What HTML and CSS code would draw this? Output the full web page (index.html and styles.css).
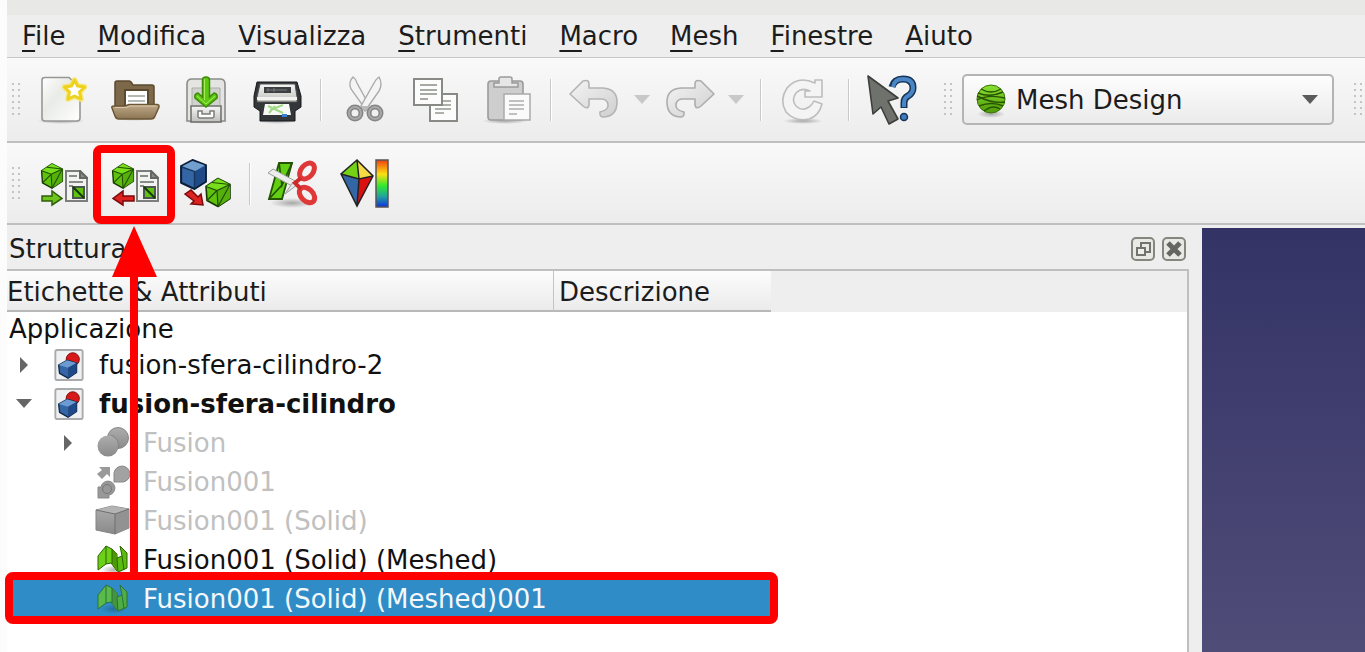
FILE: index.html
```html
<!DOCTYPE html>
<html lang="it">
<head>
<meta charset="utf-8">
<title>Mesh Design</title>
<link rel="stylesheet" href="styles.css">
</head>
<body>
<svg class="defs" aria-hidden="true">
  <defs>
    <linearGradient id="paper" x1="0" y1="0" x2="1" y2="1"><stop offset="0" stop-color="#fff"/><stop offset=".4" stop-color="#e9ebe7"/><stop offset="1" stop-color="#fff"/></linearGradient>
    <linearGradient id="metal" x1="0" y1="0" x2="0" y2="1"><stop offset="0" stop-color="#f6f6f4"/><stop offset="1" stop-color="#bfc0bc"/></linearGradient>
    <linearGradient id="green" x1="0" y1="0" x2="0" y2="1"><stop offset="0" stop-color="#8ae234"/><stop offset="1" stop-color="#4e9a06"/></linearGradient>
    <linearGradient id="wood" x1="0" y1="0" x2="0" y2="1"><stop offset="0" stop-color="#bfa888"/><stop offset="1" stop-color="#8c7552"/></linearGradient>
    <linearGradient id="silver" x1="0" y1="0" x2="1" y2="1"><stop offset="0" stop-color="#f4f4f4"/><stop offset="1" stop-color="#cfcfcf"/></linearGradient>
    <linearGradient id="gray" x1="0" y1="0" x2="0" y2="1"><stop offset="0" stop-color="#adadad"/><stop offset="1" stop-color="#8a8a8a"/></linearGradient>
    <linearGradient id="rainbow" x1="0" y1="0" x2="0" y2="1"><stop offset="0" stop-color="#f04010"/><stop offset=".3" stop-color="#fce010"/><stop offset=".55" stop-color="#30e830"/><stop offset=".78" stop-color="#20a0a0"/><stop offset="1" stop-color="#1030e0"/></linearGradient>
    <radialGradient id="shade"><stop offset="0" stop-color="#000" stop-opacity=".3"/><stop offset="1" stop-color="#000" stop-opacity="0"/></radialGradient>
    <symbol id="mesh-cube" viewBox="0 0 26 30">
      <path d="M1 9 13 1 25 7V21L13 29 2 23Z" fill="#5fc20e" stroke="#173802" stroke-width="1.600" stroke-linejoin="round"/>
      <path d="M1 9 13 1 25 7 12 13Z" fill="#76de1a"/>
      <path d="M12 13 25 7V21L13 29Z" fill="#55b00c"/>
      <path d="M1 9 12 13 25 7M12 13 13 29M12 13 2 23M25 7 13 29M7 5 25 7" fill="none" stroke="#214d04" stroke-width="1.200"/>
    </symbol>
    <symbol id="blue-cube" viewBox="0 0 26 30">
      <path d="M1 7 12 1 25 6V22L14 29 1 23Z" fill="#3465a4" stroke="#0b1f3a" stroke-width="2" stroke-linejoin="round"/>
      <path d="M2 7 12 2 24 6 14 12Z" fill="#729fcf"/>
      <path d="M14 12 24 7V21L14 28Z" fill="#204a87"/>
      <path d="M2 8 14 12V28" fill="none" stroke="#17375f" stroke-width="1.400"/>
    </symbol>
    <symbol id="mesh-file" viewBox="0 0 23 32">
      <path d="M1 1H15L22 8V31H1Z" fill="#f2f2f0" stroke="#7b7e7b" stroke-width="2"/>
      <path d="M15 1V8H22Z" fill="#8b8e88" stroke="#666864" stroke-width="2"/>
      <path d="M4 6H12M4 12H18M4 16H8" stroke="#8a8c88" stroke-width="2"/>
      <path d="M8 17H19V28H8Z" fill="#5fc20e" stroke="#4a5750" stroke-width="2"/>
      <path d="M8 17 19 28" stroke="#173802" stroke-width="2"/>
    </symbol>
    <symbol id="doc" viewBox="0 0 32 34">
      <rect x="1.500" y="1" width="29" height="32" rx="2" fill="#eef0f1" stroke="#a9abad" stroke-width="2"/>
      <circle cx="20" cy="11" r="7" fill="#d81818" stroke="#7d0808"/>
      <path d="M5 17 14 12 24 15V25L15 31 6 26Z" fill="#3465a4" stroke="#12294a" stroke-width="1.500" stroke-linejoin="round"/>
      <path d="M5 17 14 12 24 15 15 20Z" fill="#6b9bd0"/>
      <path d="M15 20 24 15V25L15 31Z" fill="#204a87"/>
    </symbol>
    <symbol id="mesh" viewBox="0 0 32 32">
      <ellipse cx="17" cy="26" rx="13" ry="5" fill="url(#shade)"/>
      <path d="M1 26V12L9 2 15 5 20 10V27L14 19 9 20Z" fill="#6bd016" stroke="#2c6505" stroke-linejoin="round"/>
      <path d="M15 5 20 10V27L15 20Z" fill="#4e9a06"/>
      <path d="M20 14 25 12 23 2 30 9V24L21 28Z" fill="#5cbc0d" stroke="#2c6505" stroke-linejoin="round"/>
      <path d="M9 2V20M15 5V20M25 12 27 26" fill="none" stroke="#2c6505"/>
    </symbol>
  </defs>
</svg>

<div class="window">
  <nav class="menubar" aria-label="Menu">
    <button class="menu" type="button"><u>F</u>ile</button>
    <button class="menu" type="button"><u>M</u>odifica</button>
    <button class="menu" type="button"><u>V</u>isualizza</button>
    <button class="menu" type="button"><u>S</u>trumenti</button>
    <button class="menu" type="button"><u>M</u>acro</button>
    <button class="menu" type="button"><u>M</u>esh</button>
    <button class="menu" type="button"><u>F</u>inestre</button>
    <button class="menu" type="button"><u>A</u>iuto</button>
  </nav>

  <div class="toolbar">
    <span class="grip"></span>
    <div class="group">
      <button class="tool" type="button" aria-label="Nuovo"><svg viewBox="0 0 48 48">
        <ellipse cx="21" cy="45" rx="24" ry="3" fill="url(#shade)"/>
        <path d="M5 1.500H29L40 12V42Q40 45 37 45H5Q2 45 2 42V4Q2 1.500 5 1.500Z" fill="url(#paper)" stroke="#969895" stroke-width="1.600"/>
        <path d="m34.500 4 3 6 7 1-5 5 1.500 7-6.500-3-6.500 3 1.500-7-5-5 7-1Z" fill="#fff" stroke="#f7e67a" stroke-width="5.500" stroke-linejoin="round"/>
        <path d="m34.500 4 3 6 7 1-5 5 1.500 7-6.500-3-6.500 3 1.500-7-5-5 7-1Z" fill="#fff" stroke="#edd21f" stroke-width="3" stroke-linejoin="round"/>
      </svg></button>
      <button class="tool" type="button" aria-label="Apri"><svg viewBox="0 0 48 48">
        <ellipse cx="24" cy="42" rx="22" ry="3" fill="url(#shade)"/>
        <path d="M4 34V7Q4 5 6 5H18Q20 5 22 9H41Q43 9 43 11V34Z" fill="#7d6849" stroke="#5c4a2f" stroke-width="1.500"/>
        <path d="M14 14H37V34H14Z" fill="#fff" stroke="#5c4a2f" stroke-width="2"/>
        <path d="M17 20H34M17 25H34" stroke="#b5b8b2" stroke-width="2"/>
        <path d="M1 32Q0 30 3 30H14L18 28.500H46Q48.500 28.500 48 31L44 40Q43 43 40 43H8Q5 43 4 40Z" fill="url(#wood)" stroke="#6b5636" stroke-width="1.500"/>
        <path d="M4 31.500H15L19 30H45" stroke="#d9c7a9" fill="none"/>
      </svg></button>
      <button class="tool" type="button" aria-label="Salva"><svg viewBox="0 0 48 48">
        <ellipse cx="24" cy="45" rx="23" ry="3" fill="url(#shade)"/>
        <path d="M5 45V8Q5 3 10 3H38Q43 3 43 8V45Z" fill="#e4e5e2" stroke="#8b8d89" stroke-width="1.600"/>
        <path d="M10 29V12H38V29" fill="#d0d2ce" stroke="#acaeaa"/>
        <path d="M9 30H39V46H9Z" fill="url(#metal)" stroke="#6b6d69" stroke-width="1.500"/>
        <path d="M16 35V40Q16 42 18 42H30Q32 42 32 40V35H28V38H20V35Z" fill="#fff" stroke="#7c7e7a" stroke-width="1.500"/>
        <path d="M20.500 4Q20.500 1 24 1T27.500 4V21L32 17Q36 18 35 22L24 31 13 22Q12 18 16 17L20.500 21Z" fill="#5ec813" stroke="#3c8a06" stroke-width="1.500"/>
        <path d="M22.500 3V24M15 20 24 28 33 20" fill="none" stroke="#a5ec5a"/>
      </svg></button>
      <button class="tool" type="button" aria-label="Stampa"><svg viewBox="0 0 48 48">
        <ellipse cx="24" cy="45" rx="20" ry="3" fill="url(#shade)"/>
        <path d="M4 6H44L48 20V31L42 35V45H7V35L1 31V20Z" fill="#33373a" stroke="#15181a"/>
        <path d="M7 8H42L44 21V26H4V21Z" fill="url(#metal)" stroke="#4e504d"/>
        <path d="M4 21H44V24H4Z" fill="#f2f2f0"/>
        <path d="M11 11H38V17H11Z" fill="#3c3f40"/>
        <path d="M13 14H34M15 12V16M21 12V16" stroke="#77797a"/>
        <path d="M12 28H36L38 39H10Z" fill="#f7f9f5"/>
        <path d="M15 30 30 37M17 34 30 29M16 37 22 30" stroke="#a4d98a" stroke-width="2"/>
        <path d="M29 38H34V41H29Z" fill="#3b7fd0"/>
      </svg></button>
    </div>
    <span class="sep"></span>
    <div class="group">
      <button class="tool" type="button" aria-label="Taglia" disabled><svg viewBox="0 0 48 48">
        <path d="M12 1Q7 6 10 13L25 34 28 29 16 7Q15 3 12 1Z" fill="#f4f4f4" stroke="#ababab" stroke-width="1.400"/>
        <path d="M38 1Q42 8 38 15L24 35 20 30 33 7Q35 3 38 1Z" fill="#f4f4f4" stroke="#ababab" stroke-width="1.400"/>
        <circle cx="14" cy="37" r="6" fill="none" stroke="#858585" stroke-width="5"/><circle cx="34" cy="37" r="6" fill="none" stroke="#858585" stroke-width="5"/>
        <circle cx="14" cy="37" r="6" fill="none" stroke="#a8a8a8" stroke-width="2"/><circle cx="34" cy="37" r="6" fill="none" stroke="#a8a8a8" stroke-width="2"/>
        <path d="M20 30 28 30 25 34H23Z" fill="#b9b9b9"/>
      </svg></button>
      <button class="tool" type="button" aria-label="Copia"><svg viewBox="0 0 48 48">
        <path d="M18 18H45V45H18Z" fill="#fcfcfc" stroke="#888a85" stroke-width="2"/>
        <path d="M23 25H39M23 29H39M23 33H39M23 37H32" stroke="#aeb1aa" stroke-width="2"/>
        <path d="M2 3H30V29H2Z" fill="#fcfcfc" stroke="#888a85" stroke-width="2"/>
        <path d="M8 9H25M8 14H25M8 18H25M8 23H16" stroke="#a6aaa2" stroke-width="2"/>
      </svg></button>
      <button class="tool" type="button" aria-label="Incolla" disabled><svg viewBox="0 0 48 48">
        <ellipse cx="22" cy="45" rx="23" ry="3" fill="url(#shade)"/>
        <rect x="5" y="5" width="35" height="39" rx="3" fill="#cecece" stroke="#9b9b9b" stroke-width="1.600"/>
        <path d="M11 11V7H16V3Q16 1 18 1H27Q29 1 29 3V7H35V11Z" fill="#e6e6e6" stroke="#9b9b9b" stroke-width="1.500"/>
        <path d="M21 18H47V44H21Z" fill="#fafafa" stroke="#ababab" stroke-width="1.500"/>
        <path d="M26 25H41M26 29H41M26 33H41M26 38H34" stroke="#c0c0c0" stroke-width="2"/>
      </svg></button>
    </div>
    <span class="sep"></span>
    <div class="history">
      <button class="tool" type="button" aria-label="Annulla" disabled><svg viewBox="0 0 48 48">
        <path d="M-1 18 12 5Q18 3 18 8V12H32Q46 13 46 26 46 40 33 41 28 41 29 36 38 34 37 28 36 23 30 23H18V29Q17 34 12 30Z" fill="url(#silver)" stroke="#b4b4b4" stroke-width="1.600" stroke-linejoin="round"/>
      </svg></button>
      <button class="caret-button" type="button" aria-label="Cronologia annulla" disabled><svg viewBox="0 0 16 10"><path d="M0 0H16L8 9Z" fill="#c8c8c8"/></svg></button>
      <button class="tool" type="button" aria-label="Ripeti" disabled><svg viewBox="0 0 48 48">
        <path d="M49 18 36 5Q30 3 30 8V12H16Q2 13 2 26 2 40 15 41 20 41 19 36 10 34 11 28 12 23 18 23H30V29Q31 34 36 30Z" fill="url(#silver)" stroke="#adadad" stroke-width="1.600" stroke-linejoin="round"/>
      </svg></button>
      <button class="caret-button" type="button" aria-label="Cronologia ripeti" disabled><svg viewBox="0 0 16 10"><path d="M0 0H16L8 9Z" fill="#c8c8c8"/></svg></button>
    </div>
    <span class="sep"></span>
    <button class="tool" type="button" aria-label="Ricarica" disabled><svg viewBox="0 0 48 48">
      <ellipse cx="22" cy="45" rx="20" ry="3" fill="url(#shade)"/>
      <path d="M34 7V4H41V21H24V15H29Q21 11 15 17 10 24 15 30 21 36 28 31 31 29 33 25L41 28Q38 40 28 43 14 46 5 36-2 24 6 12 17-1 34 7Z" fill="#f4f4f4" stroke="#bdbdbd" stroke-width="1.600" stroke-linejoin="round"/>
    </svg></button>
    <span class="sep"></span>
    <button class="tool" type="button" aria-label="Che cos'è?"><svg viewBox="0 0 48 48">
      <path d="M23 11Q25 3 34 3 44 3 44 12 44 17 39 20 35 22 35 27V32" fill="none" stroke="#173457" stroke-width="7"/>
      <path d="M24 11Q25 3 34 3 44 3 44 12 44 17 39 20 35 22 35 27V31" fill="none" stroke="#4a86c6" stroke-width="4"/>
      <circle cx="35" cy="41" r="3.500" fill="#3f7cbc" stroke="#173457" stroke-width="1.500"/>
      <path d="M-1 0 29 22 19 25 29 43 20 48 12 31 4 38Z" fill="#6f716c" stroke="#3d3f3c" stroke-width="1.600" stroke-linejoin="round"/>
    </svg></button>
    <span class="grip grip-inner"></span>
    <div class="workbench">
      <svg class="ball" viewBox="0 0 32 36" aria-hidden="true">
        <ellipse cx="16" cy="30" rx="14" ry="4" fill="url(#shade)"/>
        <circle cx="16" cy="15" r="14" fill="url(#green)" stroke="#3a7306"/>
        <path d="M6 5Q16 11 26 5M3 9Q15 14 28 8M2 16Q13 10 30 14M4 22Q17 17 28 22M9 27Q18 20 25 25M2 12Q18 20 30 18" fill="none" stroke="#285303" stroke-width="1.400"/>
      </svg>
      <select class="workbench-select" aria-label="Ambiente"><option>Mesh Design</option></select>
      <svg class="select-caret" viewBox="0 0 16 10" aria-hidden="true"><path d="M0 0H16L8 9Z" fill="#5b5b5b"/></svg>
    </div>
    <span class="grip grip-end"></span>
  </div>

  <div class="toolbar mesh-toolbar">
    <span class="grip"></span>
    <div class="group">
      <button class="tool" type="button" aria-label="Importa mesh"><svg viewBox="0 0 48 48">
        <use href="#mesh-file" x="25" y="10" width="23" height="32"/>
        <use href="#mesh-cube" x="-2" y="3" width="28" height="26"/>
        <path d="M2 36H12V31L22 38.500 12 45V41H2Z" fill="#6cc51c" stroke="#2f5e08" stroke-width="1.500"/>
      </svg></button>
      <button class="tool marked" type="button" aria-label="Esporta mesh"><svg viewBox="0 0 48 48">
        <use href="#mesh-file" x="25" y="10" width="23" height="32"/>
        <use href="#mesh-cube" x="-2" y="3" width="28" height="26"/>
        <path d="M23 36H12V31L2 38.500 12 45V41H23Z" fill="#dd2222" stroke="#7a0a0a" stroke-width="1.500"/>
      </svg></button>
      <button class="tool" type="button" aria-label="Crea mesh da forma"><svg viewBox="0 0 48 48">
        <use href="#blue-cube" x="-2" y="-1" width="27" height="31"/>
        <use href="#mesh-cube" x="23" y="17" width="26" height="31"/>
        <path d="M3 34 9 30 16 37 19 34 21 45 9 44 12 41Z" fill="#dd2222" stroke="#7a0a0a" stroke-width="1.500"/>
      </svg></button>
    </div>
    <span class="sep"></span>
    <div class="group">
      <button class="tool" type="button" aria-label="Taglia mesh"><svg viewBox="0 0 48 48">
        <ellipse cx="22" cy="43" rx="22" ry="5" fill="url(#shade)"/>
        <path d="M9 3H22L12 39H-1Z" fill="#62cf12" stroke="#245404" stroke-width="1.800"/>
        <path d="M9 3 12 25 22 3M12 25-1 39" fill="none" stroke="#245404" stroke-width="1.800"/>
        <path d="M-2 13 3 9 27 22 24 27Z" fill="#ececea" stroke="#9c9e9a"/>
        <path d="M15 34 23 22 27 25Z" fill="#e4e4e2" stroke="#9c9e9a"/>
        <ellipse cx="37" cy="11" rx="9" ry="6" transform="rotate(-50 37 11)" fill="none" stroke="#df3838" stroke-width="5"/>
        <ellipse cx="37" cy="35" rx="9" ry="6" transform="rotate(45 37 35)" fill="none" stroke="#df3838" stroke-width="5"/>
        <path d="M31 18 25 23 31 29" fill="none" stroke="#d02a2a" stroke-width="4"/>
      </svg></button>
      <button class="tool" type="button" aria-label="Curvatura"><svg viewBox="0 0 48 48">
        <path d="M16 0 0 14 18 19Z" fill="#73d216"/><path d="M16 0 32 16 18 19Z" fill="#f3dc45"/>
        <path d="M0 14 18 19 16 46Z" fill="#3465a4"/><path d="M32 16 18 19 16 46Z" fill="#dc1010"/>
        <path d="M16 0 0 14 16 46 32 16ZM0 14 18 19 32 16M16 0 18 19 16 46" fill="none" stroke="#222" stroke-width="1.500"/>
        <rect x="35" y="0" width="12" height="47" fill="url(#rainbow)" stroke="#555" stroke-width="1.500"/>
      </svg></button>
    </div>
  </div>

  <main class="content">
    <section class="dock">
      <header class="dock-title">
        <h1 class="dock-name">Struttura</h1>
        <button class="dock-button" type="button" aria-label="Stacca"><svg viewBox="0 0 24 24"><rect x="1" y="1" width="22" height="22" rx="4" fill="#e8e8e5" stroke="#86867f" stroke-width="2"/><path d="M10 10V6H19V15H15" fill="none" stroke="#73736e" stroke-width="2"/><rect x="6" y="11" width="8" height="7" fill="#eee" stroke="#73736e" stroke-width="2"/></svg></button>
        <button class="dock-button" type="button" aria-label="Chiudi"><svg viewBox="0 0 24 24"><rect x="1" y="1" width="22" height="22" rx="4" fill="#e8e8e5" stroke="#86867f" stroke-width="2"/><path d="M6 6 18 18M18 6 6 18" stroke="#666661" stroke-width="5"/></svg></button>
      </header>
      <div class="tree-box">
        <div class="columns"><span class="column label-column">Etichette &amp; Attributi</span><span class="column">Descrizione</span></div>
        <ul class="tree">
          <li class="row root">Applicazione</li>
          <li class="row"><svg class="arrow" viewBox="0 0 16 16"><path d="M4 0V16L12 8Z"/></svg><svg class="icon" viewBox="0 0 32 32"><use href="#doc" width="32" height="32"/></svg>fusion-sfera-cilindro-2</li>
          <li class="row active"><svg class="arrow" viewBox="0 0 16 16"><path d="M0 3H16L8 12Z"/></svg><svg class="icon" viewBox="0 0 32 32"><use href="#doc" width="32" height="32"/></svg>fusion-sfera-cilindro</li>
          <li class="row child hidden"><svg class="arrow" viewBox="0 0 16 16"><path d="M4 0V16L12 8Z"/></svg><svg class="icon" viewBox="0 0 32 32"><circle cx="21" cy="11" r="10.500" fill="url(#gray)" stroke="#888"/><circle cx="11" cy="19" r="10.500" fill="url(#gray)"/><path d="M14 8A11 11 0 0 1 21 22" fill="none" stroke="#858585"/></svg>Fusion</li>
          <li class="row child hidden"><svg class="arrow" viewBox="0 0 16 16"></svg><svg class="icon" viewBox="0 0 32 32"><path d="M2 1H13V11L10 8 5 13 0 8 5 4Z" fill="#999"/><path d="M17 7A8 8 0 1 1 26 16H17Z" fill="#a2a2a2" stroke="#888"/><path d="M1 21H4A7 7 0 1 1 12 29V32H1Z" fill="#989898" stroke="#888"/><circle cx="10" cy="23" r="4.500" fill="none" stroke="#777"/></svg>Fusion001</li>
          <li class="row child hidden"><svg class="arrow" viewBox="0 0 16 16"></svg><svg class="icon" viewBox="0 0 32 32"><path d="M-1 5 15 1 32 4V23L18 29-1 25Z" fill="url(#gray)" stroke="#858585"/><path d="M-1 5 15 1 32 4 18 9Z" fill="#b3b3b3"/><path d="M18 9 32 4V23L18 29Z" fill="#929292"/><path d="M-1 5 18 9 32 4M18 9V29" fill="none" stroke="#6f6f6f"/></svg>Fusion001 (Solid)</li>
          <li class="row child"><svg class="arrow" viewBox="0 0 16 16"></svg><svg class="icon" viewBox="0 0 32 32"><use href="#mesh" width="32" height="32"/></svg>Fusion001 (Solid) (Meshed)</li>
          <li class="row child selected"><svg class="arrow" viewBox="0 0 16 16"></svg><svg class="icon" viewBox="0 0 32 32"><use href="#mesh" width="32" height="32"/></svg>Fusion001 (Solid) (Meshed)001</li>
        </ul>
      </div>
    </section>
    <div class="view3d"></div>
  </main>
</div>
<svg class="pointer" viewBox="0 0 46 350" aria-hidden="true"><path d="M22 0 45 51H26V350H18V51H0Z" fill="#f00"/></svg>
</body>
</html>
```
FILE: styles.css
```css
* { box-sizing: border-box; }

body {
  margin: 0;
  background: #fcfcfc;
  color: #1c1c1c;
  font: 26px/32px "DejaVu Sans", sans-serif;
  overflow: hidden;
}

button {
  padding: 0;
  border: 0;
  background: none;
  color: inherit;
  font: inherit;
}

svg { display: block; overflow: visible; }
.defs { position: absolute; width: 0; height: 0; }

.window {
  display: flex;
  flex-direction: column;
  min-height: 100vh;
  margin-left: 7px;
}

.menubar {
  display: flex;
  gap: 32px;
  padding: 5px 15px;
  border-top: 15px solid #e8e8e6;
  border-bottom: 1px solid #c8c8c8;
  background: #eee;
}

.menu u { text-decoration-thickness: 2px; text-underline-offset: 5px; }

.toolbar {
  display: flex;
  align-items: center;
  min-height: 85px;
  padding-left: 4px;
  border-bottom: 2px solid #bfbfbf;
  background: linear-gradient(#f9f9f9, #ececec);
}

.mesh-toolbar { min-height: 82px; padding-top: 2px; }

.grip {
  flex: none;
  width: 12px;
  height: 36px;
  margin-right: 17px;
  background: radial-gradient(circle at 2px 2px, #c4c4c4 1px, transparent 1px) 0 0 / 6px 6px;
}

.grip-inner { margin: 0 7px 0 26px; }
.grip-end { margin: 0 0 0 19px; }

.group { display: flex; gap: 23px; }
.tool { flex: none; width: 48px; height: 48px; }
.tool svg { width: 48px; height: 48px; }

.sep {
  flex: none;
  width: 2px;
  height: 42px;
  margin: 0 19px;
  border-left: 1px solid #c9c9c9;
  border-right: 1px solid #fff;
}

.history { display: flex; align-items: center; gap: 15px; margin-right: -3px; }
.caret-button, .caret-button svg { width: 16px; height: 10px; }

.workbench {
  position: relative;
  flex: 0 1 372px;
  min-width: 0;
}

.workbench-select {
  width: 100%;
  height: 51px;
  padding: 1px 52px 0;
  border: 2px solid #b4b4b4;
  border-radius: 5px;
  background: linear-gradient(#fdfdfd, #ebebeb);
  color: inherit;
  font: inherit;
  appearance: none;
}

.ball {
  position: absolute;
  top: 10px;
  left: 13px;
  width: 32px;
  height: 36px;
}

.select-caret {
  position: absolute;
  top: 21px;
  right: 16px;
  width: 16px;
  height: 10px;
}

.marked { position: relative; }

.marked::after {
  content: "";
  position: absolute;
  inset: -15px -16px -16px -18px;
  border: 8px solid #f00;
  border-radius: 8px;
}

.content {
  display: grid;
  flex: 1;
  grid-template-columns: minmax(0, 1fr) 163px;
  column-gap: 13px;
  padding-top: 3px;
  background: #eee;
}

.dock { display: flex; flex-direction: column; }

.dock-title {
  display: flex;
  align-items: center;
  gap: 7px;
  min-height: 41px;
  padding: 0 3px 0 2px;
}

.dock-name { flex: 1; margin: 0; font: inherit; }
.dock-button, .dock-button svg { width: 24px; height: 24px; }

.tree-box {
  flex: 1;
  border-top: 2px solid #bfbfbf;
  border-right: 2px solid #bfbfbf;
  background: #fff;
}

.columns { display: flex; background: #eee; }

.column {
  width: 217px;
  padding: 5px 0 2px 5px;
  border-bottom: 2px solid #b8b8b8;
  background: linear-gradient(#fcfcfc, #ebebeb);
}

.label-column {
  width: 547px;
  padding-left: 0;
  border-right: 1px solid #c4c4c4;
}

.tree { margin: 0; padding: 0; list-style: none; color: #111; }

.row {
  display: flex;
  align-items: center;
  width: 764px;
  height: 39px;
  padding-left: 9px;
}

.root { height: 33px; padding-left: 2px; }
.child { padding-left: 53px; }
.active { font-weight: bold; }
.hidden { color: #c0c0c0; }
.arrow { width: 16px; height: 16px; margin-right: 21px; fill: #666; }
.icon { width: 32px; height: 32px; margin-right: 14px; }

.selected {
  position: relative;
  background: #308cc6;
  color: #f4f8fb;
}

.selected::after {
  content: "";
  position: absolute;
  inset: -7px -7px -6px -2px;
  border: 8px solid #f00;
  border-radius: 8px;
}

.selected .icon { opacity: .7; }

.view3d { background: linear-gradient(#333366, #504c78); }

.pointer {
  position: absolute;
  top: 226px;
  left: 112px;
  width: 46px;
  height: 350px;
}
```
